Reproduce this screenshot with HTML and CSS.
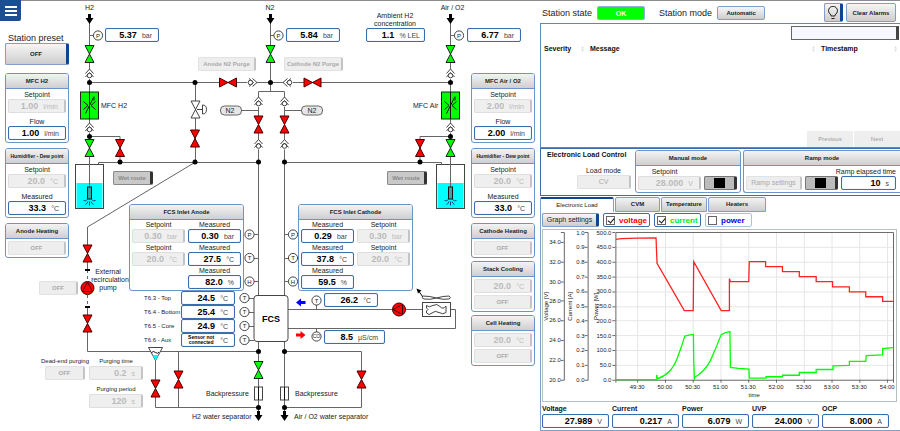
FILE: index.html
```html
<!DOCTYPE html>
<html lang="en">
<head>
<meta charset="utf-8">
<title>Fuel cell test station</title>
<link rel="stylesheet" href="styles.css">
</head>
<body>
<main class="app">
  <section class="plant" aria-label="Process diagram">
    <div class="canvas">
      <svg class="piping" width="540" height="431" viewBox="0 0 540 431">
        <defs>
          <path id="valve" d="M-4.5-8.5H4.5L-4.5 8.5H4.5Z"/>
          <g id="check"><path class="sym bare" d="M-4 0.500L0-4L4 0.500V4L0 6L-4 4Z"/><circle class="sym" cx="0" cy="2.500" r="2.300"/><path class="hollow" d="M-4 0.500L0-4L4 0.500M-4 4L0-0.500L4 4"/></g>
          <path id="flow" d="M-1.5-5H1.5V-1H4L0 5L-4-1H-1.5Z"/>
          <circle id="dot" r="2.5"/>
          <circle id="sensor" class="sym" r="4.6"/>
          <g id="mfc"><rect class="green" x="-9" y="-13.5" width="18" height="27"/><path class="ink" d="M0-13.5V13.5M-4 8L4-8M4.500-9L4.500-5M-6-4L-1.500 0L-6 4M6-4L1.500 0L6 4"/></g>
          <g id="tank"><rect class="sym" x="-14" y="0" width="28" height="44"/><rect x="-13" y="18.500" width="26" height="25" fill="#0ff"/><path class="line" d="M0-8V23"/><rect class="ink heater" x="-2" y="22.500" width="4" height="12"/><path class="spray" d="M-2 35Q-4 37-6 36M2 35Q4 37 6 36M-1.500 37Q-2 39-4 40M1.500 37Q2 39 4 40M0 37V41"/></g>
        </defs>
        <g class="line">
          <path d="M89.500 20V160M89.500 82.500H450.500M89.500 136.500H120V162M98.500 165V162.500H258.500M195.500 82V162L87.500 227V270M87.500 307V351.500H258.500"/>
          <path d="M270.500 20V91.500M258.500 295V91.500H284.500V295M241 110.500H258.500M284.500 110.500H302M284.500 162.500H441.500V165M450.500 20V160M450.500 136.500H420V162"/>
          <path d="M155.500 355V407.500H258.500M178.500 351V407M258.500 341V415M284.500 341V415M284.500 351.500H361.500V407.500H284.500"/>
          <path d="M288 309.500H455.500V328.500H288M316.500 305V309M316.500 328V332M245 298.500H254M245 312.500H254M245 326.500H254M245 340.500H254"/>
          <path d="M250 234.500H258M250 258.500H258M250 281.500H258M285 234.500H293M285 258.500H293M285 281.500H293M90 35.500H98M270 35.500H278M450 35.500H459"/>
          <path stroke-dasharray="3 3" d="M87.500 270V281M87.500 295V307"/>
        </g>
        <use href="#flow" x="89.500" y="19"/><use href="#flow" x="270.500" y="19"/><use href="#flow" x="450.500" y="19"/>
        <use href="#flow" x="258.500" y="416"/><use href="#flow" x="284.500" y="416"/>
        <g class="green">
          <use href="#valve" x="89.500" y="54"/><use href="#valve" x="270.500" y="54"/><use href="#valve" x="450.500" y="54"/>
          <use href="#valve" x="89.500" y="148"/><use href="#valve" x="450.500" y="148"/><use href="#valve" x="258.500" y="370"/>
        </g>
        <g class="red">
          <use href="#valve" x="120" y="148"/><use href="#valve" x="420" y="148"/><use href="#valve" x="195" y="138.500"/>
          <use href="#valve" x="258.500" y="124.500"/><use href="#valve" x="284.500" y="124.500"/>
          <use href="#valve" x="87.500" y="253.500"/><use href="#valve" x="87.500" y="323.500"/>
          <use href="#valve" x="155.500" y="388.500"/><use href="#valve" x="178.500" y="379.500"/><use href="#valve" x="361.500" y="379.500"/>
          <use href="#valve" transform="translate(228 82.500) rotate(90)"/><use href="#valve" transform="translate(312.500 82.500) rotate(90)"/>
        </g>
        <g class="sym"><use href="#valve" x="195.500" y="109.500"/><path d="M197 109.500H203M202.500 105V114Q206.500 114 206.500 109.500T202.500 105"/></g>
        <use href="#check" x="89.500" y="73"/><use href="#check" x="450.500" y="73"/>
        <use href="#check" x="89.500" y="127"/><use href="#check" x="450.500" y="127"/>
        <use href="#check" x="258.500" y="101"/><use href="#check" x="284.500" y="101"/>
        <use href="#check" x="258.500" y="143.500"/><use href="#check" x="284.500" y="143.500"/>
        <use href="#check" transform="translate(253 82.500) rotate(90)"/><use href="#check" transform="translate(287 82.500) rotate(-90)"/>
        <use href="#dot" x="89.500" y="82.500"/><use href="#dot" x="195" y="82.500"/><use href="#dot" x="270.500" y="82.500"/><use href="#dot" x="450.500" y="82.500"/>
        <use href="#dot" x="89.500" y="136.500"/><use href="#dot" x="450.500" y="136.500"/>
        <use href="#dot" x="120" y="162"/><use href="#dot" x="195" y="162"/><use href="#dot" x="258.500" y="162"/><use href="#dot" x="284.500" y="162"/><use href="#dot" x="420" y="162"/>
        <use href="#dot" x="258.500" y="351.500"/><use href="#dot" x="284.500" y="351.500"/><use href="#dot" x="258.500" y="407.500"/><use href="#dot" x="284.500" y="407.500"/>
        <path class="stop" d="M85 270H90M85 307H90"/>
        <use href="#mfc" x="89.500" y="105.500"/><use href="#mfc" x="450.500" y="105.500"/>
        <use href="#tank" x="89.500" y="164.500"/><use href="#tank" x="450.500" y="164.500"/>
        <g class="red"><circle cx="87.500" cy="288" r="6.500"/><path d="M87.500 282L92.500 291.500H82.500Z"/><circle cx="399" cy="309.500" r="6.500"/><path d="M393 309.500L402.500 304.500V314.500Z"/></g>
        <path class="sym" d="M148.500 347.500H162.500L155.500 360.500Z"/><path d="M152.500 355H158.500L155.500 360.500Z" fill="#0ff"/><path class="ink" d="M151.500 352.500Q153.500 350.500 155.500 352.500T159 352"/>
        <g class="pill"><rect x="220.500" y="106" width="21" height="9" rx="4"/><rect x="301.500" y="106" width="21" height="9" rx="4"/></g>
        <rect class="sym" x="254.500" y="387" width="8" height="13"/><rect class="sym" x="280.500" y="387" width="8" height="13"/><path class="ink" d="M258.500 387V400M284.500 387V400"/>
        <rect class="sym" x="254" y="295.500" width="34" height="46" rx="3"/>
        <rect class="sym" x="422.500" y="302.500" width="28" height="14"/>
        <path class="sym" d="M426.500 305.500Q429 308 433 305.500T440 306.500T446 306V312.500Q443 315 439 312.500T432 313T426.500 313V311L428 309.500L426.500 308Z"/>
        <path class="sym" d="M422.500 296Q430 296 436.500 298Q443 296 449 296Q452 298 449 299Q443 300 436.500 298Q430 300 424 299Q421 298 422.500 296Z"/>
        <path class="ink" d="M422.500 296.500L418 290"/><path d="M416.500 288.500L421.500 290.500L418 293.500Z"/>
        <path d="M296 302.500L301 298.500V301H305.500V304H301V306.500Z" fill="#00f"/>
        <path d="M305.500 335L300.500 331V333.500H296V336.500H300.500V339Z" fill="#f00"/>
        <g>
          <use href="#sensor" x="98" y="35.500"/><use href="#sensor" x="278.500" y="35.500"/><use href="#sensor" x="459" y="35.500"/>
          <use href="#sensor" x="249.500" y="234.500"/><use href="#sensor" x="249.500" y="258"/><use href="#sensor" x="249.500" y="281.500"/>
          <use href="#sensor" x="293" y="234.500"/><use href="#sensor" x="293" y="258"/><use href="#sensor" x="293" y="281.500"/>
          <use href="#sensor" x="244.500" y="298"/><use href="#sensor" x="244.500" y="312"/><use href="#sensor" x="244.500" y="326"/><use href="#sensor" x="244.500" y="340"/>
          <use href="#sensor" x="316.500" y="300.500"/><use href="#sensor" x="316.500" y="336.500"/>
        </g>
        <g class="tag mid">
          <text x="98" y="38">P</text><text x="278.500" y="38">P</text><text x="459" y="38">P</text>
          <text x="249.500" y="237">P</text><text x="249.500" y="260">T</text><text x="249.500" y="284">H</text>
          <text x="293" y="237">P</text><text x="293" y="260">T</text><text x="293" y="284">H</text>
          <text x="244.500" y="300">T</text><text x="244.500" y="314">T</text><text x="244.500" y="328">T</text><text x="244.500" y="342">T</text>
          <text x="316.500" y="303">T</text><text class="tiny" x="316.500" y="338">CO</text>
        </g>
        <g class="mid">
          <text x="89.500" y="10">H2</text><text x="270" y="10">N2</text><text x="452.500" y="10">Air / O2</text>
          <text x="395" y="18">Ambient H2</text><text x="395" y="26">concentration</text>
          <text x="230" y="113">N2</text><text x="312" y="113">N2</text>
          <text x="108" y="274">External</text><text x="110" y="282">recirculation</text><text x="108" y="290">pump</text>
          <text class="fcs" x="271" y="322">FCS</text>
        </g>
        <text x="101" y="108">MFC H2</text><text x="413" y="108">MFC Air</text>
        <text x="206" y="396">Backpressure</text><text x="295" y="396">Backpressure</text>
        <text x="192" y="419">H2 water separator</text><text x="294" y="419">Air / O2 water separator</text>
      </svg>

      <output class="readout node at-h2"><b>5.37</b><span>bar</span></output>
      <output class="readout node at-n2"><b>5.84</b><span>bar</span></output>
      <output class="readout node at-air"><b>6.77</b><span>bar</span></output>
      <output class="readout node at-ambient"><b>1.1</b><span>% LEL</span></output>
      <button class="btn node at-purge-a" disabled>Anode N2 Purge</button>
      <button class="btn node at-purge-c" disabled>Cathode N2 Purge</button>
      <button class="btn route node at-wet-a" disabled>Wet route</button>
      <button class="btn route node at-wet-c" disabled>Wet route</button>

      <section class="panel node inlet at-anode">
        <h2>FCS Inlet Anode</h2>
        <div class="pairs">
          <div class="item"><label for="a-p">Setpoint</label><div class="setpoint"><input id="a-p" value="0.30" disabled><span>bar</span></div></div>
          <div class="item"><label for="a-pm">Measured</label><output class="readout" id="a-pm"><b>0.30</b><span>bar</span></output></div>
          <div class="item"><label for="a-t">Setpoint</label><div class="setpoint"><input id="a-t" value="20.0" disabled><span>°C</span></div></div>
          <div class="item"><label for="a-tm">Measured</label><output class="readout" id="a-tm"><b>27.5</b><span>°C</span></output></div>
          <div class="item last"><label for="a-hm">Measured</label><output class="readout" id="a-hm"><b>82.0</b><span>%</span></output></div>
        </div>
      </section>
      <section class="panel node inlet at-cathode">
        <h2>FCS Inlet Cathode</h2>
        <div class="pairs">
          <div class="item"><label for="c-pm">Measured</label><output class="readout" id="c-pm"><b>0.29</b><span>bar</span></output></div>
          <div class="item"><label for="c-p">Setpoint</label><div class="setpoint"><input id="c-p" value="0.30" disabled><span>bar</span></div></div>
          <div class="item"><label for="c-tm">Measured</label><output class="readout" id="c-tm"><b>37.8</b><span>°C</span></output></div>
          <div class="item"><label for="c-t">Setpoint</label><div class="setpoint"><input id="c-t" value="20.0" disabled><span>°C</span></div></div>
          <div class="item"><label for="c-hm">Measured</label><output class="readout" id="c-hm"><b>59.5</b><span>%</span></output></div>
        </div>
      </section>

      <div class="temps node at-temps">
        <label for="t3">T6.3 - Top</label><output class="readout" id="t3"><b>24.5</b><span>°C</span></output>
        <label for="t4">T6.4 - Bottom</label><output class="readout" id="t4"><b>25.4</b><span>°C</span></output>
        <label for="t5">T6.5 - Core</label><output class="readout" id="t5"><b>24.9</b><span>°C</span></output>
        <label for="t6">T6.6 - Aux</label><output class="readout" id="t6"><b class="missing">Sensor not connected</b><span>°C</span></output>
      </div>
      <output class="readout node at-coolant"><b>26.2</b><span>°C</span></output>
      <output class="readout node at-conduct"><b>8.5</b><span>µS/cm</span></output>

      <button class="btn node at-pump" disabled>OFF</button>
      <div class="item node purge at-deadend"><label for="deadend">Dead-end purging</label><button class="btn" id="deadend" disabled>OFF</button></div>
      <div class="item node purge at-ptime"><label for="ptime">Purging time</label><div class="setpoint"><input id="ptime" value="0.2" disabled><span>s</span></div></div>
      <div class="item node purge at-pperiod"><label for="pperiod">Purging period</label><div class="setpoint"><input id="pperiod" value="120" disabled><span>s</span></div></div>
    </div>

    <div class="rail left">
      <button class="menu" aria-label="Menu"><svg width="12" height="10" viewBox="0 0 12 10"><path d="M0 1H12M0 5H12M0 9H12"/></svg></button>
      <div class="stack">
        <label class="big" for="preset">Station preset</label>
        <button class="btn marked preset" id="preset">OFF</button>
        <section class="panel loop"><h2>MFC H2</h2><div class="body">
          <div class="item"><label for="h-flow">Setpoint</label><div class="setpoint"><input id="h-flow" value="1.00" disabled><span>l/min</span></div></div>
          <div class="item"><label for="h-flowm">Flow</label><output class="readout" id="h-flowm"><b>1.00</b><span>l/min</span></output></div></div></section>
        <section class="panel loop"><h2 class="long">Humidifier - Dew point</h2><div class="body">
          <div class="item"><label for="h-dew">Setpoint</label><div class="setpoint"><input id="h-dew" value="20.0" disabled><span>°C</span></div></div>
          <div class="item"><label for="h-dewm">Measured</label><output class="readout" id="h-dewm"><b>33.3</b><span>°C</span></output></div></div></section>
        <section class="panel heat"><h2>Anode Heating</h2><div class="body"><button class="btn" disabled>OFF</button></div></section>
      </div>
    </div>
    <div class="rail right">
      <div class="stack">
        <section class="panel loop"><h2>MFC Air / O2</h2><div class="body">
          <div class="item"><label for="o-flow">Setpoint</label><div class="setpoint"><input id="o-flow" value="2.00" disabled><span>l/min</span></div></div>
          <div class="item"><label for="o-flowm">Flow</label><output class="readout" id="o-flowm"><b>2.00</b><span>l/min</span></output></div></div></section>
        <section class="panel loop"><h2 class="long">Humidifier - Dew point</h2><div class="body">
          <div class="item"><label for="o-dew">Setpoint</label><div class="setpoint"><input id="o-dew" value="20.0" disabled><span>°C</span></div></div>
          <div class="item"><label for="o-dewm">Measured</label><output class="readout" id="o-dewm"><b>33.0</b><span>°C</span></output></div></div></section>
        <section class="panel heat"><h2>Cathode Heating</h2><div class="body"><button class="btn" disabled>OFF</button></div></section>
        <section class="panel heat"><h2>Stack Cooling</h2><div class="body"><div class="setpoint"><input aria-label="Stack cooling" value="20.0" disabled><span>°C</span></div><button class="btn" disabled>OFF</button></div></section>
        <section class="panel heat"><h2>Cell Heating</h2><div class="body"><div class="setpoint"><input aria-label="Cell heating" value="20.0" disabled><span>°C</span></div><button class="btn" disabled>OFF</button></div></section>
      </div>
    </div>
  </section>

  <section class="station">
    <header class="status">
      <label class="big" for="state">Station state</label><output class="ok" id="state">OK</output>
      <label class="big mode" for="mode">Station mode</label><button class="btn auto" id="mode">Automatic</button>
      <button class="btn marked bulb" aria-label="Lamp test"><svg width="12" height="14" viewBox="0 0 12 14"><path d="M4 10V9Q1.500 7 1.500 4.800A4.300 4.300 0 0 1 10.500 4.800Q10.500 7 8 9V10ZM4.500 12.500H7.500"/></svg></button>
      <button class="btn clear">Clear Alarms</button>
    </header>

    <section class="alarms">
      <input class="search" aria-label="Filter alarms">
      <table>
        <thead><tr><th class="sev">Severity<i></i></th><th>Message<i></i></th><th class="time">Timestamp<i></i></th></tr></thead>
      </table>
      <nav><button disabled>Previous</button><button disabled>Next</button></nav>
    </section>

    <section class="control">
      <div class="loadmode"><h3>Electronic Load Control</h3><label for="cv">Load mode</label><button class="btn plain" id="cv" disabled>CV</button></div>
      <section class="panel manual"><h2>Manual mode</h2><div class="row">
        <div class="item"><label for="mset">Setpoint</label><div class="setpoint"><input id="mset" value="28.000" disabled><span>V</span></div></div>
        <button class="toggle" aria-label="Manual mode stop"></button></div></section>
      <section class="panel ramp"><h2>Ramp mode</h2><div class="row">
        <button class="btn plain" disabled>Ramp settings</button><button class="toggle" aria-label="Ramp mode stop"></button>
        <div class="item elapsed"><label for="elapsed">Ramp elapsed time</label><output class="readout" id="elapsed"><b>10</b><span>s</span></output></div></div></section>
    </section>

    <nav class="tabs"><button class="active">Electronic Load</button><button class="t2">CVM</button><button class="t3">Temperature</button><button class="t4">Heaters</button></nav>
    <section class="load">
      <div class="series">
        <button class="btn marked plain">Graph settings</button>
        <label class="v on"><input type="checkbox" checked>voltage</label>
        <label class="c on"><input type="checkbox" checked>current</label>
        <label class="p"><input type="checkbox">power</label>
      </div>
      <svg class="chart" viewBox="541 230 356 172">
        <path class="grid" d="M636.500 232V381M664.500 232V381M692.500 232V381M720.500 232V381M748.500 232V381M776.500 232V381M804.500 232V381M832.500 232V381M860.500 232V381M888.500 232V381M614 247.500H895M614 262.500H895M614 277.500H895M614 292.500H895M614 307.500H895M614 321.500H895M614 336.500H895M614 351.500H895M614 366.500H895"/>
        <path class="axis" d="M614.500 232.500H894.500V381.500H614.500ZM559 232.500H562.500V381.500H559M583 232.500H586.500V381.500H583M611 232.500H614M611 381.500H614M559 242.500H562M559 262.500H562M559 282.500H562M559 301.500H562M559 321.500H562M559 341.500H562M559 361.500H562M583 247.500H586M583 262.500H586M583 277.500H586M583 292.500H586M583 307.500H586M583 321.500H586M583 336.500H586M583 351.500H586M583 366.500H586M611 247.500H614M611 262.500H614M611 277.500H614M611 292.500H614M611 307.500H614M611 321.500H614M611 336.500H614M611 351.500H614M611 366.500H614M614.500 381V384M636.500 381V384M664.500 381V384M692.500 381V384M720.500 381V384M748.500 381V384M776.500 381V384M804.500 381V384M832.500 381V384M860.500 381V384M888.500 381V384M894.500 381V384"/>
        <g class="end">
          <text x="559" y="244">34.0</text><text x="559" y="264">32.0</text><text x="559" y="284">30.0</text><text x="559" y="304">28.0</text><text x="559" y="323">26.0</text><text x="559" y="343">24.0</text><text x="559" y="363">22.0</text><text x="559" y="383">20.0</text>
          <text x="583" y="235">1.0</text><text x="583" y="249">0.9</text><text x="583" y="264">0.8</text><text x="583" y="279">0.7</text><text x="583" y="294">0.6</text><text x="583" y="309">0.5</text><text x="583" y="324">0.4</text><text x="583" y="339">0.3</text><text x="583" y="353">0.2</text><text x="583" y="368">0.1</text><text x="583" y="383">0.0</text>
          <text x="610" y="235">500.0</text><text x="610" y="249">450.0</text><text x="610" y="264">400.0</text><text x="610" y="279">350.0</text><text x="610" y="294">300.0</text><text x="610" y="309">250.0</text><text x="610" y="324">200.0</text><text x="610" y="339">150.0</text><text x="610" y="353">100.0</text><text x="610" y="368">50.0</text><text x="610" y="383">0.0</text>
        </g>
        <g class="mid">
          <text x="636" y="390">49:30</text><text x="664" y="390">50:00</text><text x="692" y="390">50:30</text><text x="720" y="390">51:00</text><text x="748" y="390">51:30</text><text x="776" y="390">52:00</text><text x="804" y="390">52:30</text><text x="832" y="390">53:00</text><text x="860" y="390">53:30</text><text x="888" y="390">54:00</text>
          <text x="754" y="398">time</text>
          <text transform="translate(546 307) rotate(-90)">Voltage [V]</text><text transform="translate(570 307) rotate(-90)">Current [A]</text><text transform="translate(596 307) rotate(-90)">Power [W]</text>
        </g>
        <path class="trace cur" d="M614.500 381H655.700V376L656.500 380Q663 378 668 373T676.500 359Q681 347 684 337L688 336L692.700 335.300L693 361L693.700 381L694 378.500Q703 374 709.700 362Q716 348 720.700 335.500L725 333.500L729.500 332.500L730 368.500L738 369.600L748.700 370.300L749 379.300H766V378H782.500V376.500H799.500V373.700H816.500V370.700H833.500V367L850 366.600V362.600H866.500L867 356.600L883.500 356V349.500L894.500 348.700"/>
        <path class="trace volt" d="M614.500 239.500L620 238.600L636 238.300L655 238L656 263.500L683.500 311.300H692.500L693 262L720.700 311.300H729V279L730 282H748.500L749 262H765.500V267H782.500V272H799.500V277H816.500V282H833V287.300H850V292.300H866.500V297.300H883.500V302H894.500"/>
      </svg>
      <div class="totals">
        <div class="item"><label for="volt">Voltage</label><output class="readout" id="volt"><b>27.989</b><span>V</span></output></div>
        <div class="item"><label for="amp">Current</label><output class="readout" id="amp"><b>0.217</b><span>A</span></output></div>
        <div class="item"><label for="watt">Power</label><output class="readout" id="watt"><b>6.079</b><span>W</span></output></div>
        <div class="item"><label for="uvp">UVP</label><output class="readout" id="uvp"><b>24.000</b><span>V</span></output></div>
        <div class="item"><label for="ocp">OCP</label><output class="readout" id="ocp"><b>8.000</b><span>A</span></output></div>
      </div>
    </section>
  </section>
</main>
</body>
</html>
```
FILE: styles.css
```css
* { box-sizing: border-box; }
body { margin: 0; background: #fff; color: #222; font: 7px/9px "Liberation Sans", Arial, sans-serif; }
button, input { margin: 0; padding: 0; font: inherit; color: inherit; }
h2, h3 { margin: 0; }

.app { display: grid; grid-template-columns: 3fr 2fr; min-height: 100vh; box-shadow: inset 0 1px #8c8c8c; }
.big { font-size: 9px; line-height: 10px; white-space: nowrap; }

/* Shared controls */
.btn { display: block; width: 100%; height: 14px; border: 1px solid #7d9fc9; border-radius: 2px; background: linear-gradient(#f6f6f6, #cdcdcd); font-size: 6px; font-weight: bold; line-height: 8px; white-space: nowrap; text-align: center; }
.btn.marked { border-right: 3px solid #0d4593; }
.btn:disabled { border: 1px solid #e2e2e2; border-right: 2px solid #c4c4c4; background: #eee; color: #aaa; }
.btn.plain { font-size: 7px; font-weight: normal; }
.btn.route:disabled { border: 1px solid #888; border-right: 3px solid #333; background: #c9c9c9; color: #888; }

.readout, .setpoint { display: flex; align-items: center; justify-content: flex-end; gap: 5px; height: 14px; padding-right: 6px; border-radius: 2px; white-space: nowrap; }
.readout { border: 1px solid #3a6cae; background: #fff; box-shadow: inset 0 0 1px #8fb0da; }
.readout b { color: #000; font-size: 9px; }
.readout span { color: #444; }
.setpoint { border: 1px solid #dedede; border-right: 2px solid #c4c4c4; background: #efefef; color: #bbb; }
.setpoint input { flex: 1; width: 0; min-width: 0; border: 0; background: none; color: #bbb; font-size: 9px; font-weight: bold; text-align: right; }
.readout .missing { width: 28px; font-size: 5px; line-height: 5px; white-space: normal; text-align: center; }
.item label { display: flex; justify-content: center; height: 9px; white-space: nowrap; }

.panel { border: 1px solid #6c94c8; border-radius: 3px; background: #fff; }
.panel h2 { height: 15px; border-bottom: 1px solid #6c94c8; border-radius: 2px 2px 0 0; background: linear-gradient(#f3f3f3, #cfcfcf); font-size: 6px; line-height: 14px; text-align: center; white-space: nowrap; }
.panel h2.long { font-size: 5px; }

/* Process diagram */
.plant { position: relative; display: flex; justify-content: space-between; align-items: flex-start; }
.canvas { position: absolute; inset: 0; }
.piping { display: block; fill: #000; }
.piping text { fill: #222; }
.line { fill: none; stroke: #666; }
.sym { fill: #fff; stroke: #444; }
.bare { stroke: none; }
.hollow { fill: none; stroke: #444; }
.ink { fill: none; stroke: #111; }
.heater { fill: #39a7a7; }
.green { fill: #0f0; stroke: #222; }
.red { fill: #f00; stroke: #400; }
.pill { fill: #e6e6e6; stroke: #666; }
.spray { fill: none; stroke: #147; }
.stop { stroke: #000; stroke-width: 2; }
.mid { text-anchor: middle; }
.end { text-anchor: end; }
.piping .tag text { font-size: 6px; }
.piping .tag .tiny { font-size: 5px; }
.piping .fcs { font-size: 9px; font-weight: bold; fill: #000; }

.node { position: absolute; width: 54px; }
.at-h2 { left: 105px; top: 28px; }
.at-n2 { left: 286px; top: 28px; }
.at-air { left: 467px; top: 28px; }
.at-ambient { left: 366px; top: 28px; width: 59px; padding-right: 4px; }
.at-purge-a { left: 198px; top: 57px; width: 58px; }
.at-purge-c { left: 284px; top: 57px; width: 59px; }
.at-wet-a { left: 113px; top: 171px; width: 40px; }
.at-wet-c { left: 387px; top: 171px; width: 40px; }
.at-anode { left: 129px; top: 204px; }
.at-cathode { left: 298px; top: 204px; }
.at-temps { left: 144px; top: 291px; }
.at-coolant { left: 324px; top: 293px; }
.at-conduct { left: 324px; top: 330px; width: 61px; }
.at-pump { left: 39px; top: 281px; width: 39px; }
.at-deadend { left: 45px; top: 357px; width: 40px; }
.at-ptime { left: 89px; top: 357px; }
.at-pperiod { left: 89px; top: 385px; }
.purge label { font-size: 6px; }

.inlet { width: 115px; }
.pairs { display: grid; grid-template-columns: 1fr 1fr; column-gap: 3px; padding: 0 2px 1px; }
.pairs .last { grid-column: 2; }
.temps { display: grid; grid-template-columns: minmax(0, 1fr) 54px; align-items: center; width: 91px; white-space: nowrap; }
.temps label { font-size: 6px; }

.rail { position: relative; flex: none; width: 69px; }
.rail .stack { display: flex; flex-direction: column; gap: 3px; }
.rail.left .stack { padding-left: 5px; }
.rail.right .stack { padding: 73px 5px 0 0; }
.rail .loop { margin-bottom: 2px; }
.left .big { margin: 12px 0 -3px; padding-left: 3px; }
.menu { display: grid; place-items: center; width: 21px; height: 21px; border: 0; border-radius: 0 0 2px 0; background: #1c4f92; }
.menu svg { stroke: #fff; stroke-width: 2; }
.btn.preset { height: 22px; margin-bottom: 5px; }
.body { display: grid; padding: 2px; }
.loop .body { gap: 4px; padding: 1px 2px 2px; }
.heat .body { gap: 2px; }

/* Station column */
.station { display: flex; flex-direction: column; min-width: 0; }
.status { display: flex; align-items: center; height: 23px; padding: 2px 4px 0 2px; }
.ok { width: 48px; height: 14px; margin-left: 5px; border: 1px solid #8fb0da; border-radius: 2px; background: #0f0; color: #fff; font-weight: bold; line-height: 13px; text-align: center; }
.mode { margin: 0 5px 0 14px; }
.btn.auto { width: 48px; }
.btn.bulb { display: grid; place-items: center; width: 19px; height: 19px; margin: 0 3px 0 auto; }
.bulb svg { fill: none; stroke: #222; }
.btn.clear { width: 50px; height: 19px; }

.alarms { display: flex; flex: 1; flex-direction: column; border: 1px solid #5b88c0; border-right: 0; }
.search { align-self: flex-end; width: 108px; height: 14px; margin: 2px 1px 4px 0; border: 1px solid #666; border-right: 3px solid #444; background: #f6f7ff; }
.alarms table { width: 100%; border-collapse: collapse; table-layout: fixed; color: #111; }
.alarms th { position: relative; padding: 0 3px; line-height: 10px; text-align: left; }
.alarms th.sev { width: 46px; }
.alarms th.time { width: 82px; }
.alarms th i { position: absolute; top: 2px; right: 3px; width: 3px; height: 6px; background: #ddd; clip-path: polygon(50% 0, 100% 40%, 0 40%, 0 60%, 100% 60%, 50% 100%, 0 60%, 0 40%); }
.alarms nav { display: flex; gap: 1px; justify-content: flex-end; margin-top: auto; }
.alarms nav button { width: 46px; height: 16px; border: 0; background: #eee; color: #999; font-size: 6px; }

.control { display: flex; gap: 2px; height: 48px; padding: 1px 0 2px; border: 1px solid #3a6cae; border-right: 0; }
.loadmode { flex: 1; min-width: 0; padding-right: 2px; }
.loadmode h3 { padding-left: 6px; font-size: 7px; line-height: 10px; color: #111; white-space: nowrap; }
.loadmode label { display: block; margin: 6px 10px 0 0; text-align: right; }
.loadmode .btn { width: 54px; margin-left: auto; }
.manual { flex: 0 0 106px; min-width: 0; }
.ramp { flex: 0 0 157px; min-width: 0; border-right: 0; border-radius: 3px 0 0 3px; }
.row { display: flex; align-items: flex-end; gap: 3px; padding: 1px 3px 2px 2px; }
.row .item { flex: 1; min-width: 0; }
.row .btn { flex: none; width: 56px; }
.ramp .row { padding-right: 4px; }
.row .elapsed label { justify-content: flex-end; }
.manual .item label { padding-right: 10px; }
.toggle { flex: none; width: 33px; height: 14px; border: 1px solid #777; border-right: 3px solid #333; border-radius: 2px; background: linear-gradient(90deg, transparent 9px, #000 9px, #000 20px, transparent 20px) 0 1px / 100% 10px no-repeat #bcbcbc; }

.tabs { display: flex; gap: 1px; height: 15px; margin-top: 1px; }
.tabs button { border: 1px solid #7d9fc9; border-radius: 2px 2px 0 0; background: linear-gradient(#f3f3f3, #cdcdcd); font-size: 6px; font-weight: bold; }
.tabs .active { width: 74px; border-top: 2px solid #0d4593; border-bottom: 0; background: #fff; font-weight: normal; }
.tabs .t2 { width: 45px; }
.tabs .t3 { width: 46px; }
.tabs .t4 { width: 58px; }

.load { padding: 1px 3px 2px 1px; border: 1px solid #7d9fc9; border-width: 0 0 1px 1px; }
.series { display: flex; gap: 4px; height: 16px; }
.series .btn { width: 57px; }
.series label { display: flex; align-items: center; gap: 4px; width: 47px; height: 14px; padding-left: 2px; border: 1px solid #a9c2e2; border-radius: 2px; font-size: 8px; font-weight: bold; }
.series .on { border-color: #3a6cae; }
.series input { position: relative; flex: none; width: 9px; height: 9px; border: 1px solid #666; background: #fff; appearance: none; }
.series input:checked::after { content: ""; position: absolute; left: 2px; top: 0; width: 3px; height: 5px; border: solid #111; border-width: 0 1px 1px 0; transform: rotate(40deg); }
.v { color: #f00; }
.c { color: #0e0; }
.p { color: #00e; }

.chart { display: block; width: 100%; border: 1px solid #b3c2bc; fill: #222; }
.chart text { font-size: 6px; }
.grid { stroke: #e6e6e6; }
.axis { fill: none; stroke: #666; }
.trace { fill: none; stroke-width: 1.3; }
.volt { stroke: #f22; }
.cur { stroke: #0f0; }

.totals { display: grid; grid-template-columns: repeat(5, 1fr); gap: 3px; padding: 2px 8px 0 0; }
.totals label { justify-content: flex-start; height: 10px; line-height: 10px; color: #111; font-weight: bold; }
```
